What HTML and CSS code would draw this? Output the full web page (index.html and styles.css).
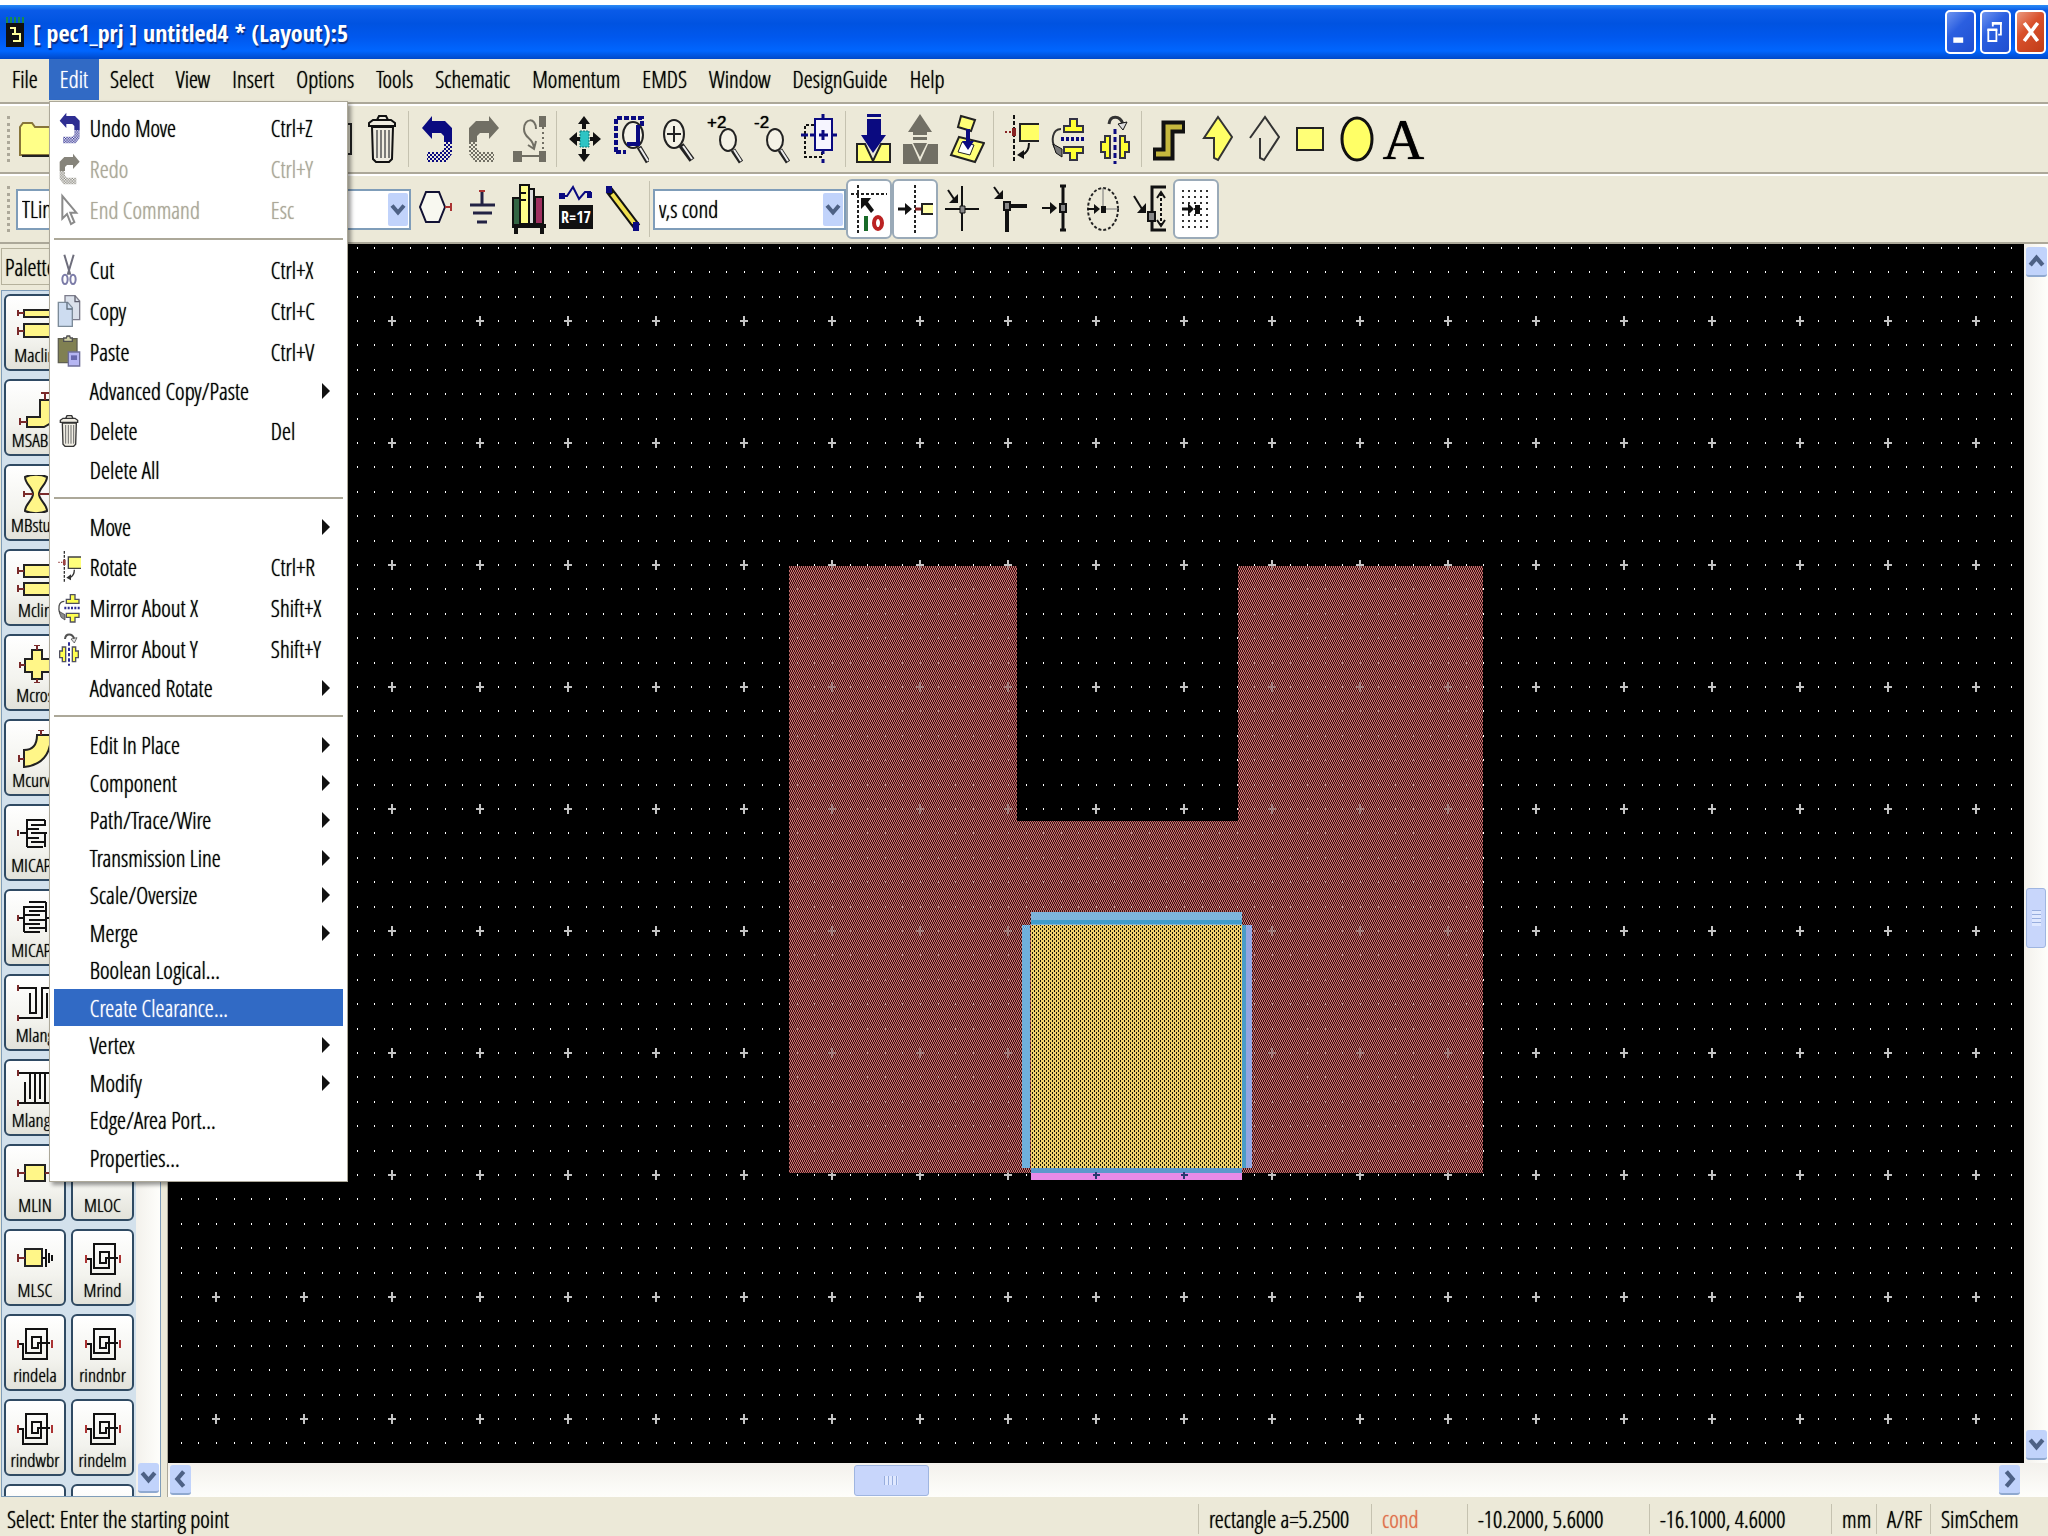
FILE: index.html
```html
<!DOCTYPE html>
<html lang="en">
<head>
    <meta charset="UTF-8">
    <meta name="viewport" content="width=device-width, initial-scale=1.0">
    <title>[ pec1_prj ] untitled4 * (Layout):5</title>
    <link rel="stylesheet" href="styles.css">
</head>
<body>
    <!-- shared icons -->
    <svg class="defs" width="0" height="0" aria-hidden="true">
        <defs>
            <pattern id="navyDots" width="4" height="4" patternUnits="userSpaceOnUse">
                <path d="M0 0h2v2h-2zM2 2h2v2h-2z" fill="#0a0a80"/>
            </pattern>
            <pattern id="grayDots" width="4" height="4" patternUnits="userSpaceOnUse">
                <path d="M0 0h2v2h-2zM2 2h2v2h-2z" fill="#716f64"/>
            </pattern>
        </defs>
        <symbol id="undo" viewBox="0 0 36 50">
            <path d="M4 14 14 2v5h13l7 7v14h-8v-6l-3-3h-9v6z" fill="#0a0a80"/>
            <path d="M26 28h8v12l-6 8H9V38h14l3-3z" fill="url(#navyDots)"/>
        </symbol>
        <symbol id="redo" viewBox="0 0 36 50">
            <path d="M34 14 24 2v5H11l-7 7v14h8v-6l3-3h9v6z" fill="#716f64"/>
            <path d="M12 28H4v12l6 8h19V38H15l-3-3z" fill="url(#grayDots)"/>
        </symbol>
        <symbol id="trash" viewBox="0 0 36 50">
            <path d="M8 13h21l-1 32-3 3H12l-3-3z" fill="#efece0" stroke="#111" stroke-width="2"/>
            <path d="M5 12V9l4-3h18l4 3v3zM13 6l2-4h7l2 4" fill="#efece0" stroke="#111" stroke-width="2"/>
            <path d="M13 16v28M17 16v28M21 16v28M25 16v28" stroke="#555" stroke-width="1.5"/>
        </symbol>
        <symbol id="rotate" viewBox="0 0 36 50">
            <path d="M11 1v47" stroke="#111" stroke-width="2" stroke-dasharray="4 2"/>
            <path d="M2 18h7" stroke="#822" stroke-width="2" stroke-dasharray="2 2"/>
            <path d="M9 14h4v8H9z" fill="#822"/>
            <path d="M36 10H17v17h19" fill="#ffff66" stroke="#222" stroke-width="2"/>
            <path d="M26 29c0 6-2 10-7 12" fill="none" stroke="#111" stroke-width="2"/>
            <path d="m14 41 7-5v9z" fill="#111"/>
        </symbol>
        <symbol id="mirrorX" viewBox="0 0 36 50">
            <path d="M14 18v-6h6V5h7v7h6v6zM14 33v6h6v7h7v-7h6v-6z" fill="#ff3" stroke="#334" stroke-width="2"/>
            <path d="M11 25h25" stroke="#0a0a80" stroke-width="4" stroke-dasharray="3 2"/>
            <path d="M11 15C2 15 1 27 5 34l6 3" fill="none" stroke="#333" stroke-width="2"/>
            <path d="m3 30 9 5v8l-6-4z" fill="#777" stroke="#111"/>
        </symbol>
        <symbol id="mirrorY" viewBox="0 0 36 50">
            <path d="M13 22H8v6H4v10h4v6h5zM23 22h5v6h4v10h-4v6h-5z" fill="#ff3" stroke="#334" stroke-width="2"/>
            <path d="M18 15v35" stroke="#0a0a80" stroke-width="3" stroke-dasharray="5 3"/>
            <path d="M12 10C13 1 23 1 26 10" fill="none" stroke="#333" stroke-width="3"/>
            <path d="m21 10 9-2-4 8z" fill="#ddd" stroke="#111"/>
        </symbol>
        <symbol id="spiral" viewBox="0 0 36 38">
            <path d="M2 19h4v15h24V4H9v24h15V12h-9v11h6v-5h12" fill="none" stroke="#111" stroke-width="2"/>
            <path d="M1 15v8M35 15v8" stroke="#a33" stroke-width="2"/>
        </symbol>
        <symbol id="down" viewBox="0 0 20 20"><path d="m4 6 6 7 6-7" fill="none" stroke="#4d6185" stroke-width="4"/></symbol>
        <symbol id="up" viewBox="0 0 20 20"><path d="m4 14 6-7 6 7" fill="none" stroke="#4d6185" stroke-width="4"/></symbol>
        <symbol id="left" viewBox="0 0 20 20"><path d="m13 3-6 7 6 7" fill="none" stroke="#4d6185" stroke-width="4"/></symbol>
        <symbol id="right" viewBox="0 0 20 20"><path d="m7 3 6 7-6 7" fill="none" stroke="#4d6185" stroke-width="4"/></symbol>
    </svg>

    <header class="titlebar">
        <svg class="app-icon" viewBox="0 0 18 32">
            <path d="M0 7h18v24H0z" fill="#111"/>
            <path d="M1 7V1M5 7V1M9 7V1M13 7V1M17 7V1" stroke="#1a8a50" stroke-width="2"/>
            <path d="M4 12h5v6h5v7H7M6 18h5" fill="none" stroke="#ff9" stroke-width="2"/>
        </svg>
        <h1>[ pec1_prj ] untitled4 * (Layout):5</h1>
        <div class="win-buttons">
            <button type="button" aria-label="Minimize"><svg viewBox="0 0 30 42"><path d="M7 27h11v6H7z" fill="#fff"/></svg></button>
            <button type="button" aria-label="Restore"><svg viewBox="0 0 30 42"><path d="M7 19h9v12H7zM12 15v-4h9v13h-3" fill="none" stroke="#fff" stroke-width="2"/><path d="M6 17h11v3H6zM11 10h11v3H11z" fill="#fff"/></svg></button>
            <button type="button" class="close" aria-label="Close"><svg viewBox="0 0 30 42"><path d="m8 11 15 20M23 11 8 31" stroke="#fff" stroke-width="4"/></svg></button>
        </div>
    </header>

    <nav class="menubar">
        <a href="#">File</a>
        <div class="menu-open">
            <a href="#" class="active">Edit</a>
            <ul class="menu">
                <li class="icon"><svg><use href="#undo"/></svg><a href="#">Undo Move</a><kbd>Ctrl+Z</kbd></li>
                <li class="icon disabled"><svg><use href="#redo"/></svg><a href="#">Redo</a><kbd>Ctrl+Y</kbd></li>
                <li class="icon disabled"><svg viewBox="0 0 36 50"><path d="M8 4v34l7-7 6 15 5-3-6-14h9z" fill="#fff" stroke="#777" stroke-width="3"/></svg><a href="#">End Command</a><kbd>Esc</kbd></li>
                <li class="sep"></li>
                <li class="icon"><svg viewBox="0 0 36 50"><path d="m11 2 9 30M25 2l-9 30" stroke="#556" stroke-width="3"/><g fill="none" stroke="#669" stroke-width="3"><ellipse cx="12" cy="39" rx="4" ry="7"/><ellipse cx="24" cy="39" rx="4" ry="7"/></g></svg><a href="#">Cut</a><kbd>Ctrl+X</kbd></li>
                <li class="icon"><svg viewBox="0 0 36 50"><path d="M12 2h15l7 8v28H12z" fill="#d5dce8" stroke="#667" stroke-width="2"/><path d="M27 2v9h7" fill="none" stroke="#445" stroke-width="2"/><path d="M2 12h14l7 8v28H2z" fill="#c5d7ee" stroke="#678" stroke-width="2"/><path d="M15 12v10h8" fill="none" stroke="#456" stroke-width="2"/></svg><a href="#">Copy</a><kbd>Ctrl+C</kbd></li>
                <li class="icon"><svg viewBox="0 0 36 50"><path d="M2 5h28v36H2z" fill="#6b6b35" stroke="#443" stroke-width="2"/><path d="M10 9V4h4l1-3h4l1 3h3v5z" fill="#cc9" stroke="#333" stroke-width="2"/><path d="M17 25h17v21H17z" fill="#aaaaf0" stroke="#558" stroke-width="2"/><path d="M21 30h9v7h-9z" fill="#5050a0"/></svg><a href="#">Paste</a><kbd>Ctrl+V</kbd></li>
                <li class="sub"><a href="#">Advanced Copy/Paste</a></li>
                <li class="icon"><svg><use href="#trash"/></svg><a href="#">Delete</a><kbd>Del</kbd></li>
                <li><a href="#">Delete All</a></li>
                <li class="sep"></li>
                <li class="sub"><a href="#">Move</a></li>
                <li class="icon"><svg><use href="#rotate"/></svg><a href="#">Rotate</a><kbd>Ctrl+R</kbd></li>
                <li class="icon"><svg><use href="#mirrorX"/></svg><a href="#">Mirror About X</a><kbd>Shift+X</kbd></li>
                <li class="icon"><svg><use href="#mirrorY"/></svg><a href="#">Mirror About Y</a><kbd>Shift+Y</kbd></li>
                <li class="sub"><a href="#">Advanced Rotate</a></li>
                <li class="sep"></li>
                <li class="sub"><a href="#">Edit In Place</a></li>
                <li class="sub"><a href="#">Component</a></li>
                <li class="sub"><a href="#">Path/Trace/Wire</a></li>
                <li class="sub"><a href="#">Transmission Line</a></li>
                <li class="sub"><a href="#">Scale/Oversize</a></li>
                <li class="sub"><a href="#">Merge</a></li>
                <li><a href="#">Boolean Logical...</a></li>
                <li class="selected"><a href="#">Create Clearance...</a></li>
                <li class="sub"><a href="#">Vertex</a></li>
                <li class="sub"><a href="#">Modify</a></li>
                <li><a href="#">Edge/Area Port...</a></li>
                <li><a href="#">Properties...</a></li>
            </ul>
        </div>
        <a href="#">Select</a>
        <a href="#">View</a>
        <a href="#">Insert</a>
        <a href="#">Options</a>
        <a href="#">Tools</a>
        <a href="#">Schematic</a>
        <a href="#">Momentum</a>
        <a href="#">EMDS</a>
        <a href="#">Window</a>
        <a href="#">DesignGuide</a>
        <a href="#">Help</a>
    </nav>

    <div class="toolbar">
        <div class="tool-start">
            <span class="grip"></span>
            <button type="button" aria-label="Open"><svg viewBox="0 0 36 50"><path d="M2 41V13l3-4h9l3 4h17v28z" fill="#ffff88" stroke="#87753a" stroke-width="2"/><path d="M4 42h32" stroke="#222" stroke-width="2"/></svg></button>
            <span class="paste-edge"></span>
        </div>
        <button type="button" aria-label="Delete"><svg><use href="#trash"/></svg></button>
        <span class="divider"></span>
        <button type="button" aria-label="Undo"><svg><use href="#undo"/></svg></button>
        <button type="button" aria-label="Redo"><svg><use href="#redo"/></svg></button>
        <button type="button" aria-label="End command"><svg viewBox="0 0 36 50"><path d="M27 2h7v11h-7zM1 37h9v11H1zM27 37h7v11h-7z" fill="#716f64"/><path d="M10 42h17" stroke="#716f64" stroke-width="2"/><path d="M31 13v24" stroke="#716f64" stroke-width="2" stroke-dasharray="2 3"/><path d="M24 15C24 3 12 4 12 15c0 10 9 8 10 19m-6-3 6 4 2-8" fill="none" stroke="#716f64" stroke-width="2"/></svg></button>
        <span class="divider"></span>
        <button type="button" aria-label="View all"><svg viewBox="0 0 36 50"><path d="M14 17h9v16h-9z" fill="#2fc4c4" stroke="#177" stroke-dasharray="2 1"/><path d="m18 2 6 8h-4v5h-4v-5h-4zM18 48l6-8h-4v-5h-4v5h-4zM3 25l8-7v5h3v4h-3v5zM35 25l-8-7v5h-3v4h3v5z" fill="#111"/></svg></button>
        <button type="button" aria-label="Zoom area"><svg viewBox="0 0 36 50"><path d="M3 38V4h26v9M3 38h10" fill="none" stroke="#0a0a80" stroke-width="4" stroke-dasharray="5 2"/><ellipse cx="20" cy="21" rx="10" ry="13" fill="#f4f2e6" stroke="#222" stroke-width="2"/><path d="M25 11v19H14" fill="none" stroke="#0a0a80" stroke-width="4"/><path d="m26 33 9 15" stroke="#222" stroke-width="5"/><path d="m27 34 8 13" stroke="#eee" stroke-width="2"/></svg></button>
        <button type="button" aria-label="Zoom in point"><svg viewBox="0 0 36 50"><ellipse cx="14" cy="20" rx="10" ry="14" fill="#f4f2e6" stroke="#222" stroke-width="2"/><path d="M7 20h14M14 12v16" stroke="#222" stroke-width="2"/><path d="m21 31 11 15" stroke="#222" stroke-width="6"/><path d="m23 32 9 13" stroke="#eee" stroke-width="2"/></svg></button>
        <button type="button" aria-label="Zoom in by 2"><svg viewBox="0 0 36 50"><text x="0" y="14" class="zoom-num">+2</text><ellipse cx="21" cy="26" rx="8" ry="11" fill="#f4f2e6" stroke="#222" stroke-width="2"/><path d="m26 36 8 12" stroke="#222" stroke-width="5"/><path d="m27 36 7 11" stroke="#eee" stroke-width="2"/></svg></button>
        <button type="button" aria-label="Zoom out by 2"><svg viewBox="0 0 36 50"><text x="0" y="14" class="zoom-num">-2</text><ellipse cx="21" cy="26" rx="8" ry="11" fill="#f4f2e6" stroke="#222" stroke-width="2"/><path d="m26 36 8 12" stroke="#222" stroke-width="5"/><path d="m27 36 7 11" stroke="#eee" stroke-width="2"/></svg></button>
        <button type="button" aria-label="Pan"><svg viewBox="0 0 36 50"><path d="M13 11H4v32h17V37" fill="none" stroke="#111" stroke-width="2" stroke-dasharray="3 2"/><path d="M14 5h17v31H14z" fill="#f6f5ff" stroke="#0a0a80" stroke-width="2"/><path d="M0 21h7M9 21h6M30 21h6M22 0v5M22 36v4M22 45v4" stroke="#0a0a80" stroke-width="3"/><path d="M18 21h9M22 16v10" stroke="#0a0a80" stroke-width="3"/></svg></button>
        <span class="divider"></span>
        <button type="button" aria-label="Push into hierarchy"><svg viewBox="0 0 36 50"><path d="M2 30h8l8 17 8-17h9v18H2z" fill="#ffff77" stroke="#222" stroke-width="2"/><path d="M12 0h14v3H12zM12 5h14v16h5l-13 18L6 21h6z" fill="#0a0a80"/></svg></button>
        <button type="button" aria-label="Pop out of hierarchy"><svg viewBox="0 0 36 50"><path d="M1 30h9l8 18 8-18h10v20H1z" fill="#716f64"/><path d="m18 0 12 18h-5v3H11v-3H6zM11 23h14v3H11zM11 29h14l-7 14z" fill="#716f64"/></svg></button>
        <button type="button" aria-label="Place component"><svg viewBox="0 0 36 50"><path d="m12 2 14 4-4 11-13-4zM10 23l25 6-9 19-24-7z" fill="#ffff77" stroke="#222" stroke-width="2"/><path d="m13 28 12 3-4 10-12-3z" fill="#fff" stroke="#222"/><path d="M17 15h4v12h4l-6 9-6-9h4z" fill="#0a0a80"/></svg></button>
        <span class="divider"></span>
        <button type="button" aria-label="Rotate"><svg><use href="#rotate"/></svg></button>
        <button type="button" aria-label="Mirror about X"><svg><use href="#mirrorX"/></svg></button>
        <button type="button" aria-label="Mirror about Y"><svg><use href="#mirrorY"/></svg></button>
        <span class="divider"></span>
        <button type="button" aria-label="Path"><svg viewBox="0 0 36 50"><path d="M2 40h15V13h17" fill="none" stroke="#111" stroke-width="13"/><path d="M5 40h12V13h14" fill="none" stroke="#c5b83e" stroke-width="5"/></svg></button>
        <button type="button" aria-label="Polygon"><svg viewBox="0 0 36 50"><path d="m20 3 14 20-14 23-4-2V24H6z" fill="#ffff66" stroke="#333" stroke-width="2"/></svg></button>
        <button type="button" aria-label="Polyline"><svg viewBox="0 0 36 50"><path d="M5 24 20 3l14 20-15 23-4-2V24" fill="none" stroke="#333" stroke-width="2"/></svg></button>
        <button type="button" aria-label="Rectangle"><svg viewBox="0 0 36 50"><path d="M5 14h26v22H5z" fill="#ffff77" stroke="#222" stroke-width="2"/></svg></button>
        <button type="button" aria-label="Circle"><svg viewBox="0 0 36 50"><ellipse cx="18" cy="25" rx="15" ry="21" fill="#ffff66" stroke="#111" stroke-width="3"/></svg></button>
        <button type="button" class="text-tool" aria-label="Text">A</button>
    </div>

    <div class="toolbar">
        <span class="grip"></span>
        <label class="combo palette-list">
            <select aria-label="Palette list"><option>TLines</option></select>
            <svg><use href="#down"/></svg>
        </label>
        <button type="button" aria-label="Port"><svg viewBox="0 0 36 50"><path d="M9 8h13l6 15-6 15H9L3 23z" fill="#f8f8f0" stroke="#113" stroke-width="2"/><path d="M28 23h6m0-4v8" stroke="#a33" stroke-width="2"/></svg></button>
        <button type="button" aria-label="Ground"><svg viewBox="0 0 36 50"><path d="M18 7v14M6 21h25M9 29h19M13 38h10" stroke="#224" stroke-width="3"/><path d="M15 7h6" stroke="#a33" stroke-width="2"/></svg></button>
        <button type="button" aria-label="Component library"><svg viewBox="0 0 36 50"><path d="M2 14h7v27H2z" fill="#364" stroke="#111" stroke-width="2"/><path d="M9 1h9v39H9z" fill="#ffff88" stroke="#111" stroke-width="2"/><path d="M10 9h5M10 16h5" stroke="#111" stroke-width="2"/><path d="M18 5h5v35h-5z" fill="#ddd" stroke="#111" stroke-width="2"/><path d="M24 13h8v27h-8z" fill="#a03060" stroke="#111" stroke-width="2"/><path d="M1 40h34v4h-2v6h-4v-6H7v6H3v-6H1z" fill="#111"/></svg></button>
        <button type="button" aria-label="Edit parameter"><svg viewBox="0 0 36 50"><path d="M3 12h6l6-9 6 12 6-7h6" fill="none" stroke="#0a0a80" stroke-width="2"/><path d="M1 9h6v6H1zM29 8h5v6h-5z" fill="#0a0a80"/><path d="M1 21h34v24H1z" fill="#111"/><text x="18" y="39" text-anchor="middle" class="r-value">R=17</text></svg></button>
        <button type="button" aria-label="Wire"><svg viewBox="0 0 36 50"><path d="m4 6 28 37" stroke="#111" stroke-width="8"/><path d="m7 10 22 29" stroke="#f0e050" stroke-width="4"/><path d="M1 2h6v7H1zM28 38h6v9h-6z" fill="#0a0a80"/></svg></button>
        <span class="divider"></span>
        <label class="combo layer-list">
            <select aria-label="Layer"><option>v,s cond</option></select>
            <svg><use href="#down"/></svg>
        </label>
        <button type="button" class="checked" aria-label="Snap enable"><svg viewBox="0 0 36 50"><path d="M0 10h36M7 1v48" stroke="#222" stroke-width="2" stroke-dasharray="3 2"/><path d="M10 14h10l-3 4 6 8-3 3-6-8-4 4z" fill="#111"/><path d="M15 32v15" stroke="#186a28" stroke-width="4"/><ellipse cx="27" cy="39" rx="4" ry="6" fill="none" stroke="#b22" stroke-width="4"/></svg></button>
        <button type="button" class="checked" aria-label="Snap to pin"><svg viewBox="0 0 36 50"><path d="M18 1v48" stroke="#222" stroke-width="2" stroke-dasharray="3 2"/><path d="M1 25h8" stroke="#111" stroke-width="3"/><path d="m8 19 7 6-7 6z" fill="#111"/><path d="M18 25h7" stroke="#822" stroke-width="3"/><path d="M36 20H25v10h11" fill="#ffffaa" stroke="#222" stroke-width="2"/></svg></button>
        <button type="button" aria-label="Snap to vertex"><svg viewBox="0 0 36 50"><path d="M18 2v45M1 25h34" stroke="#111" stroke-width="2"/><path d="M16 22h5v7h-5z" fill="#888" stroke="#111"/><path d="m4 6 6 9" stroke="#111" stroke-width="2"/><path d="M14 10v9H5z" fill="#111"/></svg></button>
        <button type="button" aria-label="Snap to midpoint"><svg viewBox="0 0 36 50"><path d="M16 48V22h20" fill="none" stroke="#111" stroke-width="4"/><path d="M13 18h6v8h-6z" fill="#888" stroke="#111" stroke-width="2"/><path d="m3 3 5 7" stroke="#111" stroke-width="2"/><path d="M12 6v9H3z" fill="#111"/></svg></button>
        <button type="button" aria-label="Snap to edge"><svg viewBox="0 0 36 50"><path d="M25 2v44M22 2h6M22 46h6" stroke="#111" stroke-width="3"/><path d="M22 20h6v8h-6z" fill="#888" stroke="#111" stroke-width="2"/><path d="M4 24h9" stroke="#111" stroke-width="2"/><path d="m12 18 7 6-7 6z" fill="#111"/></svg></button>
        <button type="button" aria-label="Snap to arc center"><svg viewBox="0 0 36 50"><ellipse cx="18" cy="25" rx="15" ry="21" fill="none" stroke="#222" stroke-width="2" stroke-dasharray="3 2"/><path d="M18 4v21h15" fill="none" stroke="#777"/><path d="M16 22h5v7h-5z" fill="#111"/><path d="M3 25h7" stroke="#111" stroke-width="2"/><path d="m9 20 6 5-6 5z" fill="#111"/></svg></button>
        <button type="button" aria-label="Snap to intersection"><svg viewBox="0 0 36 50"><path d="M34 3H20v43h14" fill="none" stroke="#111" stroke-width="3"/><path d="M16 28h7v9h-7z" fill="#888" stroke="#111" stroke-width="2"/><path d="M29 9v32" stroke="#111" stroke-width="2" stroke-dasharray="3 2"/><path d="m25 14 4-6 4 6M25 36l4 6 4-6" fill="none" stroke="#111" stroke-width="2"/><path d="m2 12 8 13" stroke="#111" stroke-width="2"/><path d="M14 19v10H5z" fill="#111"/></svg></button>
        <button type="button" class="checked" aria-label="Snap to grid"><svg viewBox="0 0 36 50"><path d="M4 7h30M4 13h30M4 19h30M4 25h30M4 31h30M4 37h30M4 43h30" stroke="#333" stroke-width="2" stroke-dasharray="2 4"/><path d="M4 25h7" stroke="#111" stroke-width="3"/><path d="m10 19 6 6-6 6zM17 21h5v9h-5z" fill="#111"/></svg></button>
    </div>

    <main>
        <aside>
            <h2>Palette</h2>
            <div class="palette">
                <div class="parts">
                    <button type="button" class="lone"><svg viewBox="0 0 36 38"><path d="M7 5h26v7H7zM7 19h26v13H7z" class="metal"/><path d="M1 8h6m-6-3v6M1 26h6m-6-4v8" class="pin"/></svg>Maclin</button>
                    <button type="button" class="lone"><svg viewBox="0 0 36 38"><path d="M10 27h13V10h18v19L27 37H10z" class="metal"/><path d="M3 32h7m-7-4v7M28 3v7m-4-7h8" class="pin"/></svg>MSABN</button>
                    <button type="button" class="lone"><svg viewBox="0 0 36 38"><path d="M8 2c6-3 16-3 22 0 0 7-8 11-8 17s8 10 8 17c-6 3-16 3-22 0 0-7 8-11 8-17S8 9 8 2z" class="metal"/><path d="M6 19h10m-9-3v6M22 19h10" class="pin"/></svg>MBstub</button>
                    <button type="button" class="lone"><svg viewBox="0 0 36 38"><path d="M7 5h26v12H7zM7 23h26v12H7z" class="metal"/><path d="M1 11h6m-6-4v7M1 29h6m-6-4v7" class="pin"/></svg>Mclin</button>
                    <button type="button" class="lone"><svg viewBox="0 0 36 38"><path d="M15 5h10v9h8v13h-8v7H15v-7H8V14h7z" class="metal"/><path d="M3 20h5m-5-3v6M20 0v5m-3-5h6M20 34v4m-3 0h6" class="pin"/></svg>Mcros</button>
                    <button type="button" class="lone"><svg viewBox="0 0 36 38"><path d="M20 5h14c0 18-8 30-27 32V20c9 0 13-6 13-15z" class="metal"/><path d="M2 29h5m-5-4v7M24 0v5m-3-5h6" class="pin"/></svg>Mcurve</button>
                    <button type="button" class="lone"><svg viewBox="0 0 36 38"><path d="M10 32V5h18M10 14h12M10 23h12M10 32h16M28 5v5H14M30 18H14M28 18v14M28 27H14M3 18h7" class="wire"/><path d="M1 15v6" class="pin"/></svg>MICAP1</button>
                    <button type="button" class="lone"><svg viewBox="0 0 36 38"><path d="M7 32V7h20M7 15h16M7 24h16M7 32h16M29 2v30M29 2H12M29 11H12M29 20H12M29 28H12M2 18h5M29 18h7" class="wire"/><path d="M1 15v6" class="pin"/></svg>MICAP2</button>
                    <button type="button" class="lone"><svg viewBox="0 0 36 38"><path d="M2 3h17v25h-6V8M2 33h23V3h10M30 33V8" class="wire"/><path d="M1 0v6M1 30v6" class="pin"/></svg>Mlang</button>
                    <button type="button" class="lone"><svg viewBox="0 0 36 38"><path d="M2 3h34M2 33h34M8 33V12M13 3v26M18 33V3M23 3v26M28 33V3M33 3v26" class="wire"/><path d="M1 0v6M1 30v6" class="pin"/></svg>Mlang6</button>
                    <button type="button" class="lone"><svg viewBox="0 0 36 38"><path d="M8 10h20v16H8z" class="metal"/><path d="M1 18h7m-7-4v8M28 18h7m0-4v8" class="pin"/></svg>MLIN</button>
                    <button type="button"><svg viewBox="0 0 36 38"><path d="M8 10h20v16H8z" class="metal"/><path d="M1 18h7m-7-4v8" class="pin"/></svg>MLOC</button>
                    <button type="button"><svg viewBox="0 0 36 38"><path d="M8 9h17v17H8z" class="metal"/><path d="M1 18h7m-7-4v8" class="pin"/><path d="M25 18h4M29 9v18M32 13v10M35 15v6" class="wire"/></svg>MLSC</button>
                    <button type="button"><svg><use href="#spiral"/></svg>Mrind</button>
                    <button type="button"><svg><use href="#spiral"/></svg>rindela</button>
                    <button type="button"><svg><use href="#spiral"/></svg>rindnbr</button>
                    <button type="button"><svg><use href="#spiral"/></svg>rindwbr</button>
                    <button type="button"><svg><use href="#spiral"/></svg>rindelm</button>
                    <button type="button" aria-label="More"></button>
                    <button type="button" aria-label="More"></button>
                </div>
                <div class="vscroll">
                    <button type="button" class="scroll-btn" aria-label="Scroll palette down"><svg><use href="#down"/></svg></button>
                </div>
            </div>
        </aside>

        <section class="workspace">
            <div class="drawing">
                <svg class="canvas" shape-rendering="crispEdges">
                    <defs>
                        <pattern id="grid" x="4" y="16" width="88" height="122" patternUnits="userSpaceOnUse">
                            <path d="M9 12h1m16 0h1m17 0h1m17 0h1m16 0h1M9 37h1m16 0h1m17 0h1m17 0h1m16 0h1M9 61h1m16 0h1m17 0h1m17 0h1m16 0h1M9 85h1m16 0h1m17 0h1m17 0h1m16 0h1M9 110h1m16 0h1m17 0h1m17 0h1m16 0h1" stroke="#fff" stroke-width="2"/>
                            <path d="M40 61h8M44 56v10" stroke="#c4c4c4" stroke-width="2"/>
                        </pattern>
                        <pattern id="redFill" width="2" height="4" patternUnits="userSpaceOnUse">
                            <path d="M0 0h2v4H0z" fill="#3c1012"/>
                            <path d="M0 0h1v2H0zM1 2h1v2H1z" fill="#c47270"/>
                        </pattern>
                        <pattern id="yellowFill" width="4" height="4" patternUnits="userSpaceOnUse">
                            <path d="M0 0h4v4H0z" fill="#f0d06c"/>
                            <path d="M0 0h1v2H0zM2 2h1v2H2z" fill="#171206"/>
                        </pattern>
                    </defs>
                    <rect width="100%" height="100%" fill="#000"/>
                    <rect width="100%" height="100%" fill="url(#grid)"/>
                    <path d="M621 322h228v255h221V322h245v607H621z" fill="url(#redFill)"/>
                    <path d="M621 322h228v255h221V322h245v607H621z" fill="url(#grid)" opacity="0.45"/>
                    <path d="M863 668h211v13H863z" fill="#7db4dc"/>
                    <path d="M863 676h211v4H863z" fill="#3f9ccc"/>
                    <path d="M854 681h8v243h-8z" fill="#6fb0dc"/>
                    <path d="M1074 681h4v243h-4z" fill="#4a9cc8"/>
                    <path d="M1078 681h6v243h-6z" fill="#92a6e2"/>
                    <path d="M863 681h211v243H863z" fill="url(#yellowFill)"/>
                    <path d="M863 924h211v5H863z" fill="#5c98cc"/>
                    <path d="M863 929h211v7H863z" fill="#e78be8"/>
                    <path d="M925 931h7M928 928v7M1013 931h7M1016 928v7" stroke="#2a3a70" stroke-width="2"/>
                </svg>
                <div class="vscroll">
                    <button type="button" class="scroll-btn" aria-label="Scroll up"><svg><use href="#up"/></svg></button>
                    <span class="thumb"></span>
                    <button type="button" class="scroll-btn" aria-label="Scroll down"><svg><use href="#down"/></svg></button>
                </div>
            </div>
            <div class="hscroll">
                <button type="button" class="scroll-btn" aria-label="Scroll left"><svg><use href="#left"/></svg></button>
                <span class="thumb"></span>
                <button type="button" class="scroll-btn" aria-label="Scroll right"><svg><use href="#right"/></svg></button>
            </div>
        </section>
    </main>

    <footer>
        <p>Select: Enter the starting point</p>
        <span class="shape">rectangle a=5.2500</span>
        <span class="layer">cond</span>
        <span class="coord">-10.2000, 5.6000</span>
        <span class="coord">-16.1000, 4.6000</span>
        <span class="unit">mm</span>
        <span class="mode">A/RF</span>
        <span class="schem">SimSchem</span>
    </footer>
</body>
</html>
```
FILE: styles.css
```css
*{
    margin: 0;
    padding: 0;
    box-sizing: border-box;
}
body{
    height: 100vh;
    display: flex;
    flex-direction: column;
    overflow: hidden;
    background-color: #ece9d8;
    color: #000;
    font: 23px "Open Sans Condensed Light", "Roboto Condensed", "Liberation Sans", sans-serif;
    text-shadow: 0 0 1px currentColor;
}
button, select{
    font: inherit;
    color: inherit;
    text-shadow: inherit;
    border: none;
    background: none;
}
a{
    color: inherit;
    text-decoration: none;
}
.defs{
    position: absolute;
}
/* title bar */
.titlebar{
    height: 59px;
    border-top: 5px solid #fff;
    padding: 0 2px 0 6px;
    display: flex;
    align-items: center;
    gap: 9px;
    background: linear-gradient(#2b8cf5, #0a5be8 10%, #0053e1 35%, #0058ee 60%, #0066ff 85%, #0048c8);
    color: #fff;
}
.titlebar h1{
    flex: 1;
    font-family: "Open Sans Condensed", "Roboto Condensed", "Liberation Sans", sans-serif;
    font-size: 24px;
    text-shadow: 1px 2px 1px #0a2a80;
}
.app-icon{
    width: 18px;
    height: 32px;
}
.win-buttons{
    display: flex;
    gap: 4px;
}
.win-buttons button{
    width: 31px;
    height: 44px;
    border: 2px solid #fff;
    border-radius: 5px;
    background: linear-gradient(135deg, #6f95f0, #2b5fe0 40%, #1f4fd0);
}
.win-buttons .close{
    background: linear-gradient(135deg, #ea9a80, #d9512c 40%, #c03c18);
}
.win-buttons svg{
    display: block;
    width: 100%;
    height: 100%;
}
/* menu bar */
.menubar{
    height: 45px;
    display: flex;
    border-bottom: 2px solid #aca899;
    padding: 0 1px 1px;
}
.menubar > a, .active{
    display: block;
    padding: 0 11px;
    line-height: 41px;
}
.menu-open{
    position: relative;
    z-index: 5;
}
.active{
    background-color: #316ac5;
    color: #fff;
}
.menu{
    position: absolute;
    left: 0;
    top: 42px;
    width: 299px;
    padding: 5px 4px;
    list-style: none;
    background-color: #fff;
    border: 1px solid #aca899;
    box-shadow: 3px 3px 4px rgba(0, 0, 0, 0.4);
}
.menu li{
    height: 37px;
    display: grid;
    grid-template-columns: 36px 181px 1fr;
    align-items: center;
}
.menu li:nth-child(even){
    height: 38px;
}
.menu li.icon{
    height: 41px;
}
.menu li a{
    grid-column: 2;
    white-space: nowrap;
}
.menu kbd{
    font: inherit;
}
.menu svg{
    grid-column: 1;
    width: 24px;
    height: 34px;
    margin-left: 3px;
}
.menu .icon svg{
    opacity: 0.85;
}
.menu li.disabled{
    color: #aca899;
}
.menu li.sep{
    height: 19px;
    display: block;
}
.menu li.sep::before{
    content: "";
    display: block;
    height: 8px;
    border-bottom: 2px solid #aca899;
}
.menu li.sub::after{
    content: "";
    grid-column: 3;
    margin-left: 51px;
    width: 8px;
    border: 8px solid transparent;
    border-left: 8px solid #111;
    border-right: none;
}
.menu li.selected{
    background-color: #316ac5;
    color: #fff;
}
/* toolbars */
.toolbar{
    height: 70px;
    display: flex;
    align-items: center;
    border-top: 2px solid #fff;
    border-bottom: 2px solid #aca899;
}
.toolbar button{
    width: 47px;
    height: 60px;
    flex: none;
    display: flex;
    align-items: center;
    justify-content: center;
}
.toolbar button svg{
    width: 36px;
    height: 50px;
}
.toolbar button.checked{
    width: 46px;
    background-color: #fff;
    border: 2px solid #9aaab8;
    border-radius: 6px;
}
.toolbar button.text-tool{
    font: 58px "Liberation Serif", serif;
}
.tool-start{
    width: 358px;
    flex: none;
    display: flex;
    align-items: center;
}
.tool-start button{
    margin-left: 2px;
}
.paste-edge{
    width: 4px;
    height: 32px;
    margin: 0 6px 0 auto;
    border: 2px solid #222;
    border-left: none;
}
.grip{
    width: 3px;
    height: 46px;
    margin-left: 7px;
    border-left: 3px dotted #aca899;
}
.divider{
    width: 1px;
    height: 56px;
    margin: 0 3px;
    background-color: #c5c2b0;
}
.combo{
    position: relative;
    height: 41px;
    flex: none;
}
.combo select{
    appearance: none;
    width: 100%;
    height: 100%;
    padding: 0 4px;
    background-color: #fff;
    border: 2px solid #7f9db9;
}
.combo svg{
    position: absolute;
    right: 3px;
    top: 4px;
    width: 20px;
    height: 33px;
    background-color: #c1d3fb;
    border-radius: 2px;
    pointer-events: none;
}
.palette-list{
    width: 395px;
    margin-left: 6px;
}
.layer-list{
    width: 193px;
}
.zoom-num{
    font: 17px "Liberation Sans", sans-serif;
}
.r-value{
    font: bold 16px "Open Sans Condensed", "Liberation Sans", sans-serif;
    fill: #fff;
    text-shadow: none;
}
/* main area */
main{
    flex: 1;
    min-height: 0;
    display: flex;
}
aside{
    width: 168px;
    flex: none;
    display: flex;
    flex-direction: column;
    padding: 4px 6px 0 1px;
    border-right: 1px solid #aca899;
}
aside h2{
    height: 37px;
    padding-left: 3px;
    border: 1px solid #b5b19c;
    font-size: 23px;
    font-weight: normal;
    line-height: 36px;
}
.palette{
    flex: 1;
    min-height: 0;
    margin-top: 5px;
    display: flex;
    overflow: hidden;
    border: 1px solid #7f9db9;
    background-color: #d3e1ec;
}
.parts{
    padding: 3px 2px;
    display: grid;
    grid-template-columns: 62px 63px;
    grid-auto-rows: 77px;
    gap: 8px 5px;
}
.parts button{
    display: flex;
    flex-direction: column;
    align-items: center;
    border: 2px solid #2f4a63;
    border-radius: 6px;
    background: linear-gradient(#fff, #f3f3ee 60%, #e2e2da);
    font-size: 19px;
    line-height: 24px;
    overflow: hidden;
}
.parts .lone{
    grid-column: 1;
}
.parts svg{
    width: 36px;
    height: 38px;
    flex: none;
    margin-top: 9px;
}
.metal{
    fill: #fff688;
    stroke: #222;
    stroke-width: 2px;
}
.pin{
    fill: none;
    stroke: #7a2a2a;
    stroke-width: 2px;
}
.wire{
    fill: none;
    stroke: #111;
    stroke-width: 2px;
}
.workspace{
    flex: 1;
    min-width: 0;
    display: flex;
    flex-direction: column;
}
.drawing{
    flex: 1;
    min-height: 0;
    display: flex;
}
.canvas{
    flex: 1;
    min-width: 0;
    height: 100%;
}
/* scroll bars */
.vscroll{
    width: 24px;
    flex: none;
    display: flex;
    flex-direction: column;
    align-items: center;
    justify-content: space-between;
    padding: 3px 0;
    background: linear-gradient(90deg, #f3f1ec, #fefefb);
}
.hscroll{
    height: 34px;
    display: flex;
    align-items: center;
    justify-content: space-between;
    padding: 0 28px 0 2px;
    background: linear-gradient(#f3f1ec, #fefefb);
}
.scroll-btn{
    width: 21px;
    height: 30px;
    background-color: #c1d3fb;
    border-bottom: 2px solid #8fa9d0;
    border-radius: 3px;
}
.scroll-btn svg{
    display: block;
    width: 100%;
    height: 100%;
}
.thumb{
    border: 1px solid #9fb5e0;
    border-radius: 3px;
    background: repeating-linear-gradient(90deg, #98aede 0 1px, #dfe8ff 1px 4px) center / 14px 9px no-repeat #c8d6fb;
}
.drawing .thumb{
    width: 20px;
    height: 60px;
    margin-top: 128px;
    background: repeating-linear-gradient(#98aede 0 1px, #dfe8ff 1px 4px) center / 9px 16px no-repeat #c8d6fb;
}
.hscroll .thumb{
    width: 75px;
    height: 31px;
    margin-right: 408px;
}
.palette .vscroll{
    flex: 1;
    justify-content: flex-end;
}
/* status bar */
footer{
    height: 39px;
    flex: none;
    display: flex;
    align-items: center;
    padding-top: 4px;
    line-height: 30px;
    white-space: nowrap;
}
footer p{
    flex: 1;
    padding-left: 7px;
}
footer span{
    padding-left: 10px;
    border-left: 1px solid #c5c2b0;
}
.shape{
    width: 173px;
}
.layer{
    width: 96px;
    color: #e0704c;
}
.coord{
    width: 182px;
}
.unit{
    width: 45px;
}
.mode{
    width: 54px;
}
.schem{
    width: 118px;
}
```
